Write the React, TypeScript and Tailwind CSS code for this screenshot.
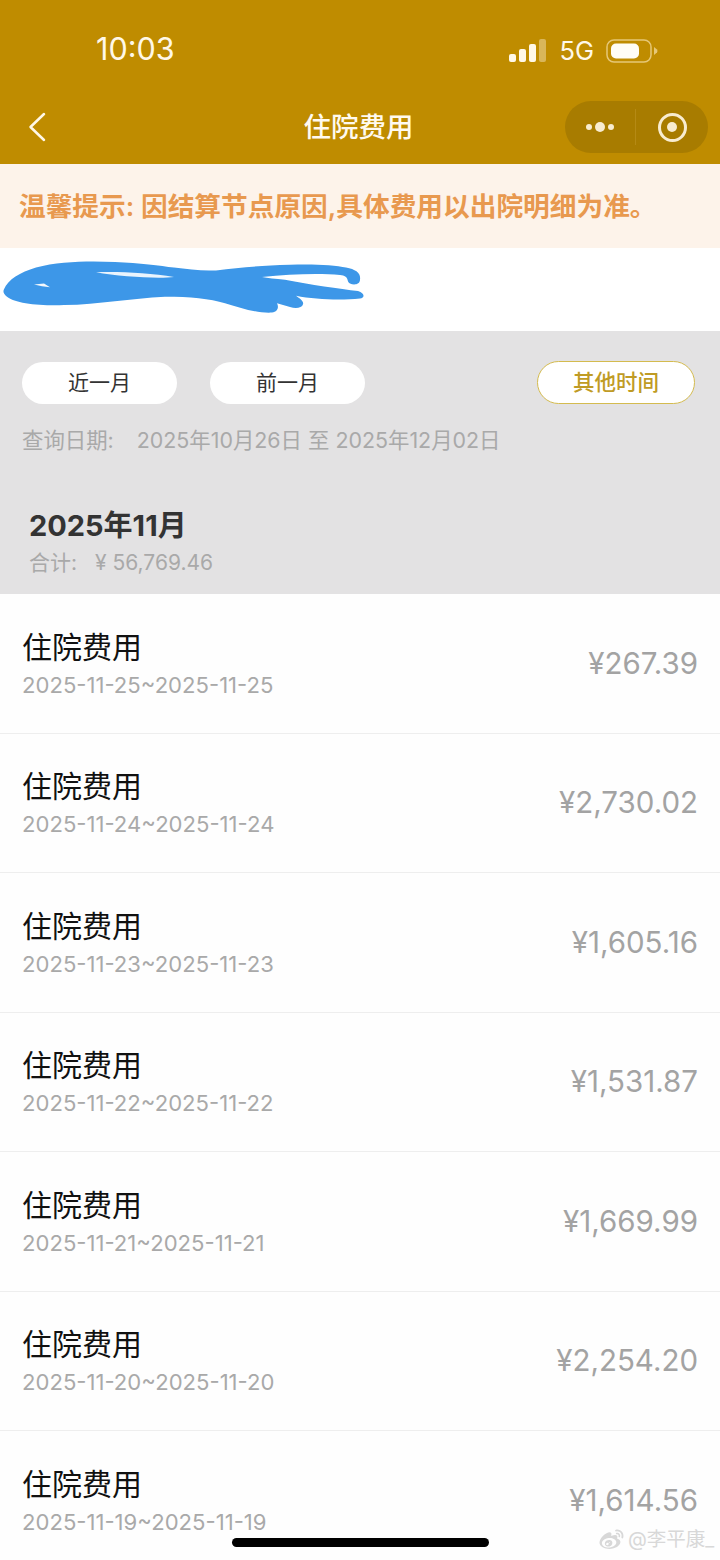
import { FaWeibo } from "react-icons/fa";

const rows = [
  { date: "2025-11-25~2025-11-25", amount: "¥267.39" },
  { date: "2025-11-24~2025-11-24", amount: "¥2,730.02" },
  { date: "2025-11-23~2025-11-23", amount: "¥1,605.16" },
  { date: "2025-11-22~2025-11-22", amount: "¥1,531.87" },
  { date: "2025-11-21~2025-11-21", amount: "¥1,669.99" },
  { date: "2025-11-20~2025-11-20", amount: "¥2,254.20" },
  { date: "2025-11-19~2025-11-19", amount: "¥1,614.56" },
];

const StatusIcons = () => (
  <div className="flex items-center">
    <svg width="38" height="24" viewBox="0 0 38 24" className="mr-[13px]">
      <rect x="1" y="15" width="7" height="8" rx="2" fill="#fff8e8" />
      <rect x="11" y="10" width="7" height="13" rx="2" fill="#fff8e8" />
      <rect x="21" y="5" width="7" height="18" rx="2" fill="#fff8e8" />
      <rect x="31" y="0" width="7" height="23" rx="2" fill="#d9b65a" />
    </svg>
    <span className="text-[25.5px] leading-none text-[#fff8e8] mr-[12px]">5G</span>
    <svg width="52" height="24" viewBox="0 0 52 24">
      <rect x="1" y="1" width="44" height="22" rx="7" fill="none" stroke="#e6c777" strokeWidth="1.5" />
      <rect x="5" y="4.5" width="28" height="15" rx="5" fill="#fffdf5" />
      <path d="M48 8 L51 10.5 Q52 12 51 13.5 L48 16 Z" fill="#e6c777" />
    </svg>
  </div>
);

const Scribble = () => (
  <svg width="372" height="60" viewBox="0 0 372 64" preserveAspectRatio="none" className="block">
    <path
      fill="#3d97e8"
      d="M4 30 C 8 20 20 12 36 7 C 60 0 90 0 115 1 C 140 2 160 5 174 7 C 188 9 204 11 216 10 C 240 7 260 5 290 4 C 310 3 335 4 346 7 C 356 9 361 13 360 20 C 360 25 354 26 350 24 C 346 22 350 16 340 15 C 320 13 290 14 262 17 C 268 18 275 19 285 20 C 310 25 340 30 358 32 C 365 34 365 40 360 40 C 340 42 315 41 296 37 C 300 40 304 43 303 46 C 302 50 296 51 290 49 L 277 45 C 279 49 278 54 272 55 C 258 56 240 50 225 45 C 210 40 190 38 165 38 C 130 40 100 46 64 47 C 40 48 15 45 7 38 C 3 35 3 32 4 30 Z"
    />
    <path fill="#eaf4fd" d="M96 12 C 120 11 150 13 174 17 C 160 19 120 17 96 12 Z" />
    <path fill="#f4f8fc" d="M34 25 L44 24 L50 28 L42 27 Z" />
  </svg>
);

const App = () => {
  return (
    <div className="relative w-[720px] h-[1560px] overflow-hidden bg-[#fefefe] font-['Inter','Noto_Sans_CJK_SC',sans-serif]">
      <header className="h-[164px] bg-[#bf8c00] text-white">
        <div className="h-[101px] flex items-center justify-between pl-[96px] pr-[62px]">
          <span className="text-[30.5px] leading-none text-[#fff8e8] -mt-[3px]">10:03</span>
          <StatusIcons />
        </div>
        <div className="h-[52px] flex items-center justify-between pl-[28px] pr-[12px]">
          <svg width="18" height="30" viewBox="0 0 18 30" fill="none" stroke="#fff8e8" strokeWidth="2.5" strokeLinecap="round" strokeLinejoin="round">
            <path d="M16 2 L2.5 15 L16 28" />
          </svg>
          <span className="text-[27.5px] font-medium leading-none text-[#fffaf0] ml-[106px] mt-[2px]">住院费用</span>
          <div className="w-[143px] h-[52px] rounded-full bg-[#a87c00] flex items-center">
            <div className="w-[71px] h-[36px] flex items-center justify-center gap-[3px] border-r border-[#b58a15]">
              <span className="w-[6px] h-[6px] rounded-full bg-[#f8ecd0]" />
              <span className="w-[10px] h-[10px] rounded-full bg-[#f8ecd0]" />
              <span className="w-[6px] h-[6px] rounded-full bg-[#f8ecd0]" />
            </div>
            <div className="flex-1 flex items-center justify-center">
              <div className="w-[29px] h-[29px] rounded-full border-[3px] border-[#f8ecd0] flex items-center justify-center">
                <span className="w-[10px] h-[10px] rounded-full bg-[#f8ecd0]" />
              </div>
            </div>
          </div>
        </div>
      </header>

      <div className="h-[84px] bg-[#fdf3ea] flex items-center pl-[19px] text-[26.7px] font-semibold leading-none text-[#e8994f] whitespace-nowrap">
        温馨提示: 因结算节点原因,具体费用以出院明细为准。
      </div>

      <div className="h-[83px] bg-white pt-[13px]">
        <Scribble />
      </div>

      <section className="h-[263px] bg-[#e3e2e3]">
        <div className="flex items-center pt-[30px] pl-[22px] pr-[25px]">
          <button className="w-[155px] h-[42px] rounded-full bg-white text-[21px] text-[#333333]">近一月</button>
          <button className="w-[155px] h-[42px] rounded-full bg-white text-[21px] text-[#333333] ml-[33px]">前一月</button>
          <button className="w-[158px] h-[43px] rounded-full bg-white border border-[#d4bb4f] text-[21.5px] text-[#bf9b25] font-medium ml-auto">其他时间</button>
        </div>
        <div className="mt-[22px] pl-[22px] text-[21.4px] leading-[28px] text-[#a9a9a9] whitespace-nowrap">
          <span>查询日期:</span>
          <span className="ml-[23px]">2025年10月26日 至 2025年12月02日</span>
        </div>
        <div className="mt-[54px] pl-[29px] text-[29px] font-bold leading-[36px] text-[#333333]">2025年11月</div>
        <div className="mt-[5px] pl-[29px] text-[21px] leading-[28px] text-[#a9a9a9]">
          <span>合计:</span>
          <span className="ml-[18px]">¥ 56,769.46</span>
        </div>
      </section>

      <ul>
        {rows.map((row) => (
          <li key={row.date} className="h-[139.5px] flex items-center justify-between pl-[22px] pr-[22px] border-b border-[#eeeeee]">
            <div>
              <div className="text-[30px] leading-[38px] text-[#111111]">住院费用</div>
              <div className="mt-[5px] text-[22.1px] leading-[28px] text-[#a9a9a9]">{row.date}</div>
            </div>
            <div className="text-[29.5px] leading-none text-[#a3a3a3]">{row.amount}</div>
          </li>
        ))}
      </ul>

      <div className="absolute left-[232px] top-[1538px] w-[257px] h-[9px] rounded-full bg-black" />
      <div className="absolute left-[598px] top-[1528px] flex items-center text-[#d8d8d8]">
        <FaWeibo className="w-[27px] h-[24px]" />
        <span className="ml-[3px] text-[19.5px] leading-none whitespace-nowrap">@李平康_</span>
      </div>
    </div>
  );
};

export default App;
